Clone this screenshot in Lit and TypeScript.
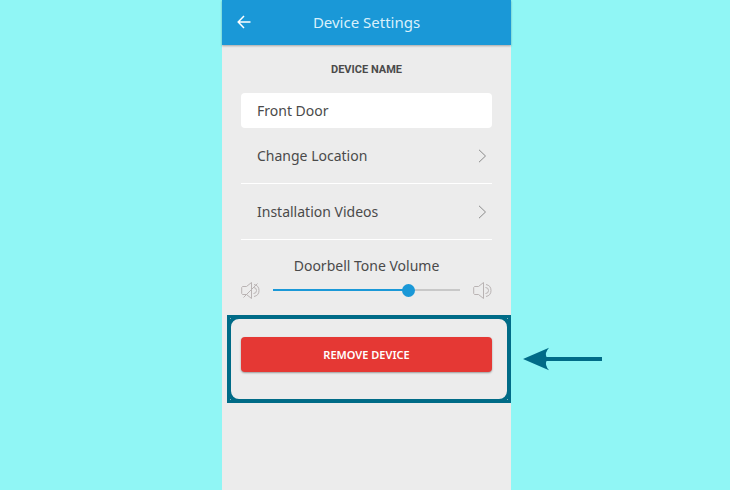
import { LitElement, html, css, svg } from "lit";
import { customElement, property, state } from "lit/decorators.js";

const speaker = svg`
  <path d="M10.5 1.5v16L5.5 13.5h-4l-.8-1v-6l.8-1h4z" />
  <path d="M12.5 6.5q3 0 3 3t-3 3" />
  <path d="M13 3.5q5 1 5 6t-5 6" />`;

@customElement("settings-row")
class SettingsRow extends LitElement {
  static styles = css`
    :host {
      display: block;
    }
    .row {
      display: flex;
      align-items: center;
      justify-content: space-between;
      height: 55px;
      padding: 0 5px 0 16px;
      border-bottom: 1px solid #fff;
      color: #4a4a4a;
      font: 14px/20px "Noto Sans", sans-serif;
      text-decoration: none;
    }
    .chevron {
      width: 10px;
      height: 14px;
      fill: none;
      stroke: #8a8a8a;
    }
  `;

  @property() label = "";

  render() {
    return html`<a class="row" href="#">
      <span>${this.label}</span>
      <svg class="chevron" viewBox="0 0 10 14" aria-hidden="true">
        <path d="M2 .8 8.5 7 2 13.2" />
      </svg>
    </a>`;
  }
}

@customElement("app-root")
class AppRoot extends LitElement {
  static styles = css`
    :host {
      display: grid;
      grid-template-columns: minmax(0, 222fr) minmax(0, 289fr) minmax(0, 219fr);
      min-height: 100vh;
      background: #90f6f5;
      font-family: "Noto Sans", sans-serif;
      color: #4a4a4a;
    }
    * {
      box-sizing: border-box;
    }
    .phone {
      grid-column: 2;
      background: #ececec;
    }
    .bar {
      display: grid;
      grid-template-columns: 44px 1fr 44px;
      align-items: center;
      height: 45px;
      padding-bottom: 1px;
      background: #1a98d7;
      box-shadow: 0 1px 2px rgba(0, 0, 0, 0.3);
      color: #d9f0fb;
    }
    .back {
      display: grid;
      place-items: center;
      height: 44px;
      padding: 0;
      border: 0;
      background: none;
    }
    .back svg {
      width: 14px;
      height: 14px;
      fill: none;
      stroke: #fff;
      stroke-width: 1.5;
    }
    .title {
      margin: 0;
      font: 400 15px/20px "Noto Sans", sans-serif;
      text-align: center;
      white-space: nowrap;
    }
    .content {
      padding: 17px 19px 0;
    }
    .caption {
      display: block;
      margin-bottom: 15px;
      font: 700 11px/16px Roboto, sans-serif;
      text-align: center;
    }
    .name {
      display: block;
      width: 100%;
      height: 35px;
      padding: 0 16px;
      border: 0;
      border-radius: 4px;
      background: #fff;
      color: #4a4a4a;
      font: 14px/20px "Noto Sans", sans-serif;
    }
    .volume-label {
      display: block;
      padding-top: 16px;
      font: 14px/20px "Noto Sans", sans-serif;
      text-align: center;
    }
    .volume {
      display: flex;
      align-items: center;
      justify-content: space-between;
      height: 28px;
    }
    .speaker {
      flex: none;
      width: 19px;
      height: 19px;
      fill: none;
      stroke: #b9b3b3;
    }
    .slider {
      flex: 1;
      min-width: 0;
      height: 14px;
      margin: 0 13px;
      appearance: none;
      background: linear-gradient(#1a98d7, #1a98d7) 0 50% / var(--level) 2px no-repeat,
        linear-gradient(#c8c8c8, #c8c8c8) 0 50% / 100% 2px no-repeat;
    }
    .slider::-webkit-slider-thumb {
      appearance: none;
      width: 13px;
      height: 13px;
      border-radius: 50%;
      background: #1a98d7;
    }
    .callout {
      position: relative;
      margin: 11px 0 0 5px;
      border: 3px solid #006b87;
    }
    .ring {
      margin: -3px;
      padding: 18px 15px 27px 10px;
      border: 4px solid #006b87;
      border-radius: 12px;
    }
    .remove {
      display: block;
      width: 100%;
      height: 35px;
      border: 0;
      border-radius: 4px;
      background: #e53834;
      box-shadow: 0 1px 2px rgba(0, 0, 0, 0.35);
      color: #fff;
      font: 600 11px/16px "Noto Sans", sans-serif;
    }
    .arrow {
      position: absolute;
      top: 50%;
      left: calc(100% + 15px);
      width: 79px;
      height: 24px;
      transform: translateY(-50%);
      fill: #006b87;
    }
  `;

  @state() private level = 74;

  private onVolume(e: Event) {
    this.level = Number((e.target as HTMLInputElement).value);
  }

  render() {
    return html`
      <main class="phone">
        <header class="bar">
          <button class="back" aria-label="Back">
            <svg viewBox="0 0 14 14"><path d="M13.5 7H1.5M7 1 1.2 7 7 13" /></svg>
          </button>
          <h1 class="title">Device Settings</h1>
        </header>
        <div class="content">
          <label class="caption" for="name">DEVICE NAME</label>
          <input class="name" id="name" type="text" value="Front Door" />
          <settings-row label="Change Location"></settings-row>
          <settings-row label="Installation Videos"></settings-row>
          <label class="volume-label" for="volume">Doorbell Tone Volume</label>
          <div class="volume">
            <svg class="speaker" viewBox="0 0 19 19" aria-hidden="true">
              ${speaker}
              <path d="M2.5 16.5 16.5 2.5" />
            </svg>
            <input
              class="slider"
              id="volume"
              type="range"
              min="0"
              max="100"
              style="--level: ${this.level}%"
              .value=${String(this.level)}
              @input=${this.onVolume}
            />
            <svg class="speaker" viewBox="0 0 19 19" aria-hidden="true">${speaker}</svg>
          </div>
        </div>
        <section class="callout">
          <div class="ring">
            <button class="remove">REMOVE DEVICE</button>
          </div>
          <svg class="arrow" viewBox="0 0 79 24" aria-hidden="true">
            <path d="M0 12 26 .8Q21.500 6 23.500 10H79v4H23.500Q21.500 18 26 23.200z" />
          </svg>
        </section>
      </main>
    `;
  }
}
